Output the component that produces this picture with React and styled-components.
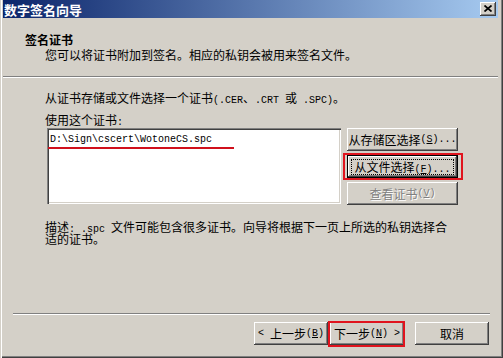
import React from "react";
import styled, { createGlobalStyle, css } from "styled-components";

const GlobalStyle = createGlobalStyle`
  html, body { margin: 0; padding: 0; background: #d4d0c8; }
  body {
    font-family: "Noto Sans CJK SC", "Noto Sans", sans-serif;
    font-size: 12px;
    color: #000;
  }
`;

const Window = styled.div`
  width: 503px;
  height: 358px;
  box-sizing: border-box;
  display: flex;
  flex-direction: column;
  background: #d4d0c8;
  padding: 0 5px 3px 3px;
  box-shadow: inset 1px 0 0 #d4d0c8, inset 2px 0 0 #ffffff,
    inset -1px -1px 0 #404040, inset -2px -2px 0 #808080;
`;

const TitleBar = styled.div`
  height: 18px;
  flex: none;
  display: flex;
  align-items: center;
  justify-content: space-between;
  padding: 0 2px 0 1px;
  background: linear-gradient(to right, #0a246a, #a6caf0);
  color: #fff;
  font-weight: bold;
  font-size: 13px;
  line-height: 13px;
`;

const raised = css`
  background: #d4d0c8;
  box-shadow: inset -1px -1px 0 #404040, inset 1px 1px 0 #ffffff,
    inset -2px -2px 0 #808080, inset 2px 2px 0 #d4d0c8;
`;

const CloseButton = styled.div`
  ${raised};
  width: 16px;
  height: 14px;
  display: flex;
  align-items: center;
  justify-content: center;
  padding-bottom: 1px;
  box-sizing: border-box;
`;

const Header = styled.div`
  height: 58px;
  box-sizing: border-box;
  flex: none;
  padding: 16px 0 0 22px;
  line-height: 12px;
`;

const HeaderTitle = styled.div`
  font-weight: bold;
`;

const HeaderSub = styled.div`
  margin-top: 3px;
  padding-left: 20px;
`;

const Etched = styled.div`
  flex: none;
  height: 0;
  border-top: 1px solid #808080;
  border-bottom: 1px solid #ffffff;
  margin: ${(p) => p.$margin || "0"};
`;

const Body = styled.div`
  flex: 1;
  padding: 14px 0 0 42px;
  line-height: 12px;
  white-space: nowrap;
`;

const Lat = styled.span`
  font-family: "Liberation Mono", monospace;
  font-size: 10px;
  line-height: 0;
`;

const Key = styled.span`
  text-decoration: underline;
  text-underline-offset: 1px;
`;

const Label = styled.div`
  margin-top: ${(p) => p.$top || 0}px;
`;

const PickRow = styled.div`
  margin-top: 2px;
  display: flex;
  gap: 6px;
  padding-left: 2px;
`;

const ListBox = styled.div`
  width: 294px;
  height: 76px;
  box-sizing: border-box;
  background: #fff;
  padding: 6px 3px;
  box-shadow: inset 1px 1px 0 #808080, inset 2px 2px 0 #404040,
    inset -1px -1px 0 #ffffff, inset -2px -2px 0 #d4d0c8;
`;

const PathText = styled.div`
  font-family: "Liberation Mono", monospace;
  font-size: 10px;
  line-height: 12px;
`;

const RedLine = styled.div`
  width: 186px;
  height: 2px;
  margin: 1px 0 0 -2px;
  background: #d0101c;
`;

const ButtonCol = styled.div`
  display: flex;
  flex-direction: column;
  gap: 4px;
`;

const Button = styled.div`
  ${raised};
  position: relative;
  width: ${(p) => p.$w}px;
  height: 23px;
  box-sizing: border-box;
  display: flex;
  align-items: center;
  justify-content: center;
  line-height: 12px;
  white-space: nowrap;
  ${(p) =>
    p.$default &&
    css`
      border: 1px solid #000;
      box-shadow: inset -1px -1px 0 #404040, inset 1px 1px 0 #ffffff,
        inset -2px -2px 0 #808080;
    `}
  ${(p) =>
    p.$disabled &&
    css`
      color: #808080;
      text-shadow: 1px 1px 0 #ffffff;
    `}
  ${(p) =>
    p.$mark &&
    css`
      &::after {
        content: "";
        position: absolute;
        top: ${p.$mark[0]}px;
        right: ${p.$mark[1]}px;
        bottom: ${p.$mark[2]}px;
        left: ${p.$mark[3]}px;
        border: 2px solid #e0141e;
        pointer-events: none;
      }
    `}
`;

const FocusRect = styled.span`
  outline: 1px dotted #000;
  outline-offset: 1px;
  padding: 0 1px;
`;

const Desc = styled.div`
  margin-top: 16px;
`;

const Footer = styled.div`
  flex: none;
  height: 40px;
  box-sizing: border-box;
  display: flex;
  justify-content: flex-end;
  align-items: flex-start;
  padding: 7px 9px 0 0;
`;

const Gap = styled.div`
  width: ${(p) => p.$w}px;
`;

export default function App() {
  return (
    <>
      <GlobalStyle />
      <Window>
        <TitleBar>
          <span>数字签名向导</span>
          <CloseButton>
            <svg width="8" height="7" viewBox="0 0 8 7">
              <path d="M0.5 0.5L7.5 6.5M7.5 0.5L0.5 6.5" stroke="#000" strokeWidth="1.7" />
            </svg>
          </CloseButton>
        </TitleBar>
        <Header>
          <HeaderTitle>签名证书</HeaderTitle>
          <HeaderSub>您可以将证书附加到签名。相应的私钥会被用来签名文件。</HeaderSub>
        </Header>
        <Etched />
        <Body>
          <Label>
            从证书存储或文件选择一个证书<Lat>(.CER</Lat>、<Lat>.CRT&nbsp;</Lat>或
            <Lat>&nbsp;.SPC)</Lat>。
          </Label>
          <Label $top={10}>
            使用这个证书<Lat>:</Lat>
          </Label>
          <PickRow>
            <ListBox>
              <PathText>D:\Sign\cscert\WotoneCS.spc</PathText>
              <RedLine />
            </ListBox>
            <ButtonCol>
              <Button $w={111}>
                从存储区选择<Lat>
                  (<Key>S</Key>)...
                </Lat>
              </Button>
              <Button $w={111} $default $mark={[-3, -6, -3, -5]}>
                <FocusRect>
                  从文件选择<Lat>
                    (<Key>F</Key>)...
                  </Lat>
                </FocusRect>
              </Button>
              <Button $w={111} $disabled>
                查看证书<Lat>
                  (<Key>V</Key>)
                </Lat>
              </Button>
            </ButtonCol>
          </PickRow>
          <Desc>
            描述<Lat>:&nbsp;.spc&nbsp;</Lat>文件可能包含很多证书。向导将根据下一页上所选的私钥选择合
            <br />
            适的证书。
          </Desc>
        </Body>
        <Etched $margin="0 8px 0 10px" />
        <Footer>
          <Button $w={74}>
            <Lat>&lt;&nbsp;</Lat>上一步<Lat>
              (<Key>B</Key>)
            </Lat>
          </Button>
          <Gap $w={2} />
          <Button $w={74} $mark={[-1, -1, -2, -2]}>
            下一步<Lat>
              (<Key>N</Key>)&nbsp;&gt;
            </Lat>
          </Button>
          <Gap $w={11} />
          <Button $w={74}>取消</Button>
        </Footer>
      </Window>
    </>
  );
}
